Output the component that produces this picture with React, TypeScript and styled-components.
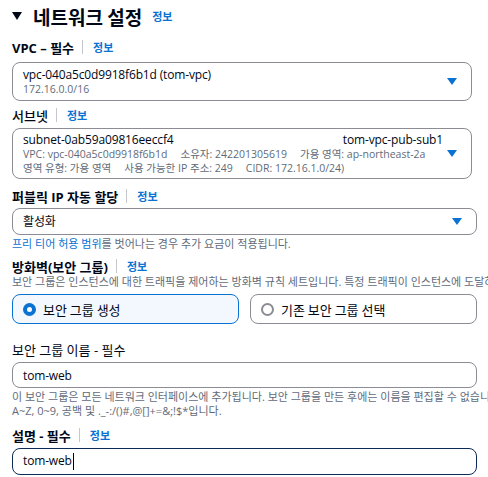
import React from "react";
import styled, { createGlobalStyle } from "styled-components";

const GlobalStyle = createGlobalStyle`
  html, body { margin: 0; padding: 0; background: #ffffff; }
  body {
    overflow: hidden;
    font-family: "Open Sans", "Noto Sans CJK KR", sans-serif;
    color: #000716;
  }
`;

const Page = styled.div`
  width: 700px;
  padding: 0 0 0 12px;
  display: flex;
  flex-direction: column;
`;

const Header = styled.div`
  display: flex;
  height: 32px;
  align-items: center;
  gap: 10px;
`;

const Triangle = styled.span`
  width: 0;
  height: 0;
  border-left: 5px solid transparent;
  border-right: 5px solid transparent;
  border-top: 8px solid #000716;
  margin-right: 1px;
`;

const Title = styled.h2`
  margin: 0;
  font-size: 19px;
  font-weight: 700;
  font-family: "Noto Sans CJK KR", sans-serif;
`;

const InfoLink = styled.span`
  color: #0972d3;
  font-size: 11px;
  font-weight: 700;
  font-family: "Noto Sans CJK KR", sans-serif;
`;

const Field = styled.div<{ $top: number }>`
  margin-top: ${(p) => p.$top}px;
  display: flex;
  flex-direction: column;
`;

const LabelRow = styled.div`
  display: flex;
  align-items: center;
  height: 18px;
  gap: 8px;
`;

const Label = styled.span<{ $weight?: number }>`
  font-size: 13px;
  font-weight: ${(p) => p.$weight ?? 700};
  font-family: "Open Sans", "Noto Sans CJK KR", sans-serif;
  white-space: nowrap;
`;

const Divider = styled.span`
  width: 1px;
  height: 14px;
  background: #c6c6cd;
  margin-right: 2px;
`;

const Box = styled.div<{ $h: number; $w: number; $focused?: boolean }>`
  box-sizing: border-box;
  width: ${(p) => p.$w}px;
  height: ${(p) => p.$h}px;
  border: 1px solid ${(p) => (p.$focused ? "#0b2a55" : "#8c8c94")};
  border-radius: 8px;
  display: flex;
  align-items: center;
  padding: 0 14px 0 10px;
  background: #fff;
`;

const BoxBody = styled.div`
  flex: 1;
  display: flex;
  flex-direction: column;
  min-width: 0;
`;

const MainText = styled.span`
  font-size: 12px;
  letter-spacing: -0.15px;
  line-height: 15px;
  color: #000716;
  white-space: nowrap;
`;

const SubText = styled.span`
  font-size: 10.5px;
  line-height: 14px;
  color: #5f6b7a;
  white-space: nowrap;
`;

const SubRow = styled.div`
  display: flex;
  gap: 13px;
  font-size: 10.5px;
  line-height: 14px;
  color: #5f6b7a;
  white-space: nowrap;
`;

const SpreadRow = styled.div`
  display: flex;
  justify-content: space-between;
  padding-right: 4px;
`;

const Caret = styled.span`
  width: 0;
  height: 0;
  border-left: 5px solid transparent;
  border-right: 5px solid transparent;
  border-top: 7px solid #0972d3;
  flex: none;
`;

const Hint = styled.div<{ $top?: number }>`
  margin-top: ${(p) => p.$top ?? 0}px;
  font-size: 11px;
  line-height: 14px;
  color: #5f6b7a;
  white-space: nowrap;
`;

const HintLink = styled.span`
  color: #0972d3;
`;

const Cursor = styled.span`
  display: inline-block;
  width: 1px;
  height: 17px;
  background: #000;
  vertical-align: middle;
  margin-left: 1px;
`;

const CardRow = styled.div`
  display: flex;
  gap: 11px;
  margin-top: 5px;
`;

const RadioCard = styled.div<{ $selected?: boolean }>`
  box-sizing: border-box;
  width: 227px;
  height: 30px;
  border: 1px solid ${(p) => (p.$selected ? "#0972d3" : "#8c8c94")};
  background: ${(p) => (p.$selected ? "#f2f8fd" : "#fff")};
  border-radius: 8px;
  display: flex;
  align-items: center;
  gap: 7px;
  padding-left: 10px;
`;

const RadioDot = styled.span<{ $selected?: boolean }>`
  box-sizing: border-box;
  width: 13px;
  height: 13px;
  border-radius: 50%;
  border: ${(p) => (p.$selected ? "4px solid #0972d3" : "2px solid #8c8c94")};
  background: #fff;
  flex: none;
`;

const RadioText = styled.span`
  font-size: 13px;
  font-family: "Noto Sans CJK KR", sans-serif;
`;

function LabelWithInfo({ text, weight }: { text: string; weight?: number }) {
  return (
    <LabelRow>
      <Label $weight={weight}>{text}</Label>
      <Divider />
      <InfoLink>정보</InfoLink>
    </LabelRow>
  );
}

export default function App() {
  return (
    <>
      <GlobalStyle />
      <Page>
        <Header>
          <Triangle />
          <Title>네트워크 설정</Title>
          <InfoLink>정보</InfoLink>
        </Header>

        <Field $top={6}>
          <LabelWithInfo text="VPC – 필수" />
          <Field $top={6}>
            <Box $h={39} $w={460}>
              <BoxBody>
                <MainText>vpc-040a5c0d9918f6b1d (tom-vpc)</MainText>
                <SubText>172.16.0.0/16</SubText>
              </BoxBody>
              <Caret />
            </Box>
          </Field>
        </Field>

        <Field $top={5}>
          <LabelWithInfo text="서브넷" weight={500} />
          <Field $top={4}>
            <Box $h={51} $w={460}>
              <BoxBody>
                <SpreadRow>
                  <MainText>subnet-0ab59a09816eeccf4</MainText>
                  <MainText>tom-vpc-pub-sub1</MainText>
                </SpreadRow>
                <SubRow>
                  <span>VPC: vpc-040a5c0d9918f6b1d</span>
                  <span>소유자: 242201305619</span>
                  <span>가용 영역: ap-northeast-2a</span>
                </SubRow>
                <SubRow>
                  <span>영역 유형: 가용 영역</span>
                  <span>사용 가능한 IP 주소: 249</span>
                  <span>CIDR: 172.16.1.0/24)</span>
                </SubRow>
              </BoxBody>
              <Caret />
            </Box>
          </Field>
        </Field>

        <Field $top={8}>
          <LabelWithInfo text="퍼블릭 IP 자동 할당" />
          <Field $top={3}>
            <Box $h={27} $w={465}>
              <BoxBody>
                <MainText>활성화</MainText>
              </BoxBody>
              <Caret />
            </Box>
            <Hint $top={2}>
              <HintLink>프리 티어 허용 범위</HintLink>를 벗어나는 경우 추가 요금이 적용됩니다.
            </Hint>
          </Field>
        </Field>

        <Field $top={6}>
          <LabelWithInfo text="방화벽(보안 그룹)" />
          <Hint>
            보안 그룹은 인스턴스에 대한 트래픽을 제어하는 방화벽 규칙 세트입니다. 특정 트래픽이 인스턴스에 도달하도록 허용하는 규칙을 추가합니다.
          </Hint>
          <CardRow>
            <RadioCard $selected>
              <RadioDot $selected />
              <RadioText>보안 그룹 생성</RadioText>
            </RadioCard>
            <RadioCard>
              <RadioDot />
              <RadioText>기존 보안 그룹 선택</RadioText>
            </RadioCard>
          </CardRow>
        </Field>

        <Field $top={16}>
          <LabelRow>
            <Label $weight={400}>보안 그룹 이름 - 필수</Label>
          </LabelRow>
          <Field $top={4}>
            <Box $h={26} $w={465}>
              <MainText>tom-web</MainText>
            </Box>
            <Hint $top={2}>
              이 보안 그룹은 모든 네트워크 인터페이스에 추가됩니다. 보안 그룹을 만든 후에는 이름을 편집할 수 없습니다. 최대 길이는 255자입니다. 유효한 문자:
            </Hint>
            <Hint>A~Z, 0~9, 공백 및 ._-:/()#,@[]+=&;{}!$*입니다.</Hint>
          </Field>
        </Field>

        <Field $top={8}>
          <LabelWithInfo text="설명 - 필수" />
          <Field $top={4}>
            <Box $h={27} $w={465} $focused>
              <MainText>
                tom-web
                <Cursor />
              </MainText>
            </Box>
          </Field>
        </Field>
      </Page>
    </>
  );
}
